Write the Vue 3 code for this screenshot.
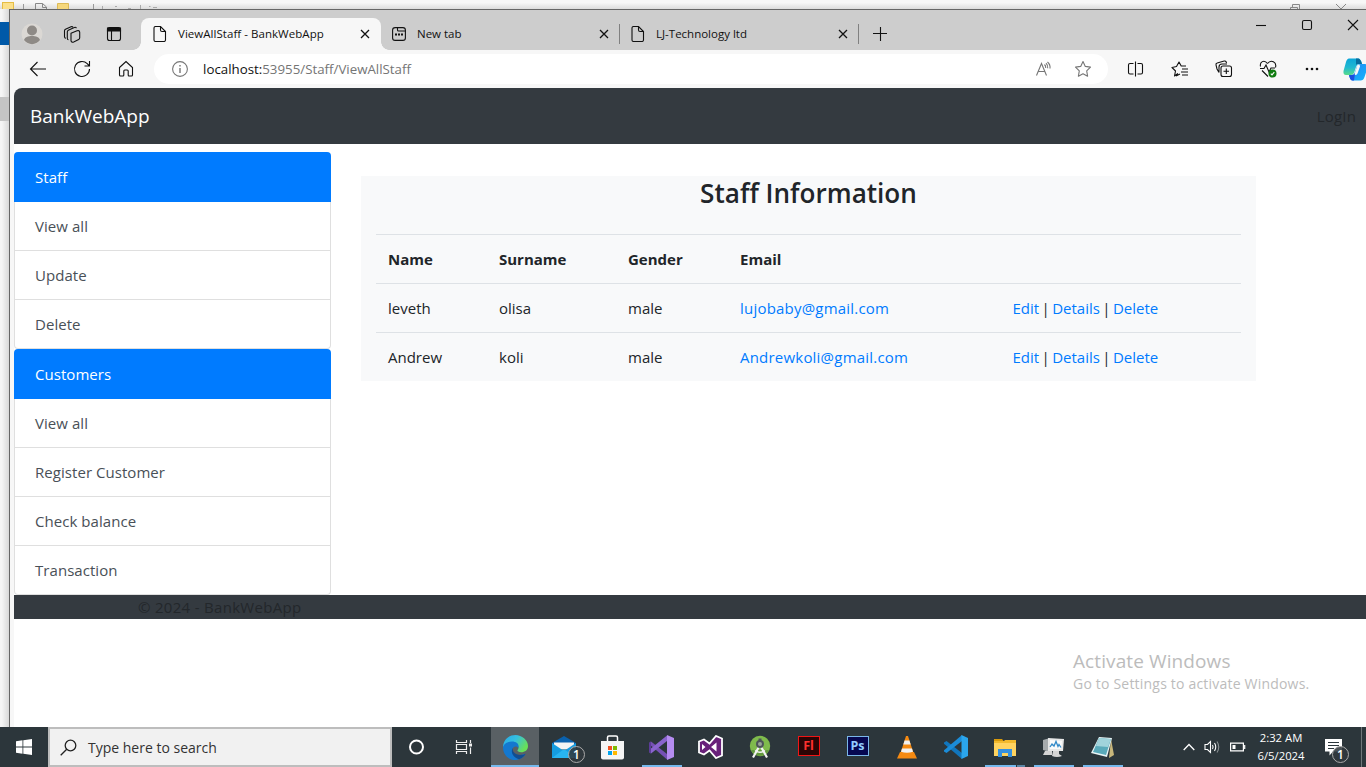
<script setup>
const groups = [
  { title: 'Staff', items: ['View all', 'Update', 'Delete'] },
  { title: 'Customers', items: ['View all', 'Register Customer', 'Check balance', 'Transaction'] },
]
const staff = [
  { name: 'leveth', surname: 'olisa', gender: 'male', email: 'lujobaby@gmail.com' },
  { name: 'Andrew', surname: 'koli', gender: 'male', email: 'Andrewkoli@gmail.com' },
]
</script>

<template>
  <div class="screen">
    <div class="desk">
      <div class="behind-top">
        <svg width="1366" height="9" viewBox="0 0 1366 9">
          <rect x="2.5" y="2.5" width="11" height="14" fill="#fbe08b" stroke="#e5bd45" />
          <path d="M23.5 4v5M93.5 4v5" stroke="#999" />
          <path d="M35.5 9V3.500h7l4 3.500v2M42.500 3.500v4h4" fill="none" stroke="#888" />
          <path d="M57.500 9V3.500h11V9" fill="#f5d77c" stroke="#dcba57" />
          <path d="M102.500 6v3M115 6.500h2M128 8.500h3M140.500 5v4M149 6.500h1.500M153 7.500h4" stroke="#aaa" />
          <path d="M1290.500 9V7.500h7V9M1292.500 7V4.500h7V9M1336 4l5 5 5-5" fill="none" stroke="#888" />
        </svg>
      </div>
      <div class="behind-left"><i class="blue"></i><i class="grey"></i></div>
      <div class="window">
        <div class="tabs">
          <span class="slot avatar"><svg width="22" height="22" viewBox="0 0 22 22"><circle cx="11" cy="11" r="10.500" fill="#dbd8d4" /><circle cx="11" cy="7.500" r="5" fill="#8e8a86" /><path d="M3 17c1-5.500 15-5.500 16 0-4 5.500-12 5.500-16 0z" fill="#8e8a86" /></svg></span>
          <span class="slot stack"><svg width="18" height="18" viewBox="0 0 18 18" class="ico"><path d="M7.500 7.500l6-2.500q2.500-.7 2.700 1.500v5.500q0 1.200-1 1.700l-5 2.600q-2.200.7-2.700-1.500zM5 14q-1.200 0-1.200-1.500V6q0-1 1-1.600l6-2.700q1.300-.6 2.200.6M2.500 12.500q-1.500 0-1.500-1.500V5q0-1 1-1.500l5.500-2.500q1.200-.5 2 .3" transform="translate(.5 .8)" /></svg></span>
          <span class="slot mid"><svg width="16" height="16" viewBox="0 0 16 16" class="ico"><rect x="1.500" y="1.500" width="13" height="13" rx="2" /><path d="M1.500 2h13v3h-13z" fill="#111" /><path d="M5.500 5v9.500" /></svg></span>
          <div class="tab active">
            <svg width="14" height="16" viewBox="0 0 14 16" class="ico"><path d="M2.500.5h5l5 5V14q0 1.500-1.500 1.500H2.500Q1 15.500 1 14V2Q1 .5 2.500.5zM7.500.5V4q0 1.500 1.500 1.500h3.500" /></svg>
            <span class="tab-title">ViewAllStaff - BankWebApp</span>
            <svg width="10" height="10" viewBox="0 0 10 10" class="ico x"><path d="M1 1l8 8M9 1L1 9" /></svg>
          </div>
          <div class="tab">
            <svg width="14" height="14" viewBox="0 0 14 14" class="ico"><rect x=".6" y=".6" width="12.800" height="12.800" rx="2.500" /><path d="M5.500.6V3q0 1 1 1h7" /><path d="M3 7.500h2M6 7.500h2M9 7.500h2" stroke-width="2" /></svg>
            <span class="tab-title">New tab</span>
            <svg width="10" height="10" viewBox="0 0 10 10" class="ico x"><path d="M1 1l8 8M9 1L1 9" /></svg>
            <i class="sep"></i>
          </div>
          <div class="tab">
            <svg width="14" height="16" viewBox="0 0 14 16" class="ico"><path d="M2.500.5h5l5 5V14q0 1.500-1.500 1.500H2.500Q1 15.500 1 14V2Q1 .5 2.500.5zM7.500.5V4q0 1.500 1.500 1.500h3.500" /></svg>
            <span class="tab-title">LJ-Technology ltd</span>
            <svg width="10" height="10" viewBox="0 0 10 10" class="ico x"><path d="M1 1l8 8M9 1L1 9" /></svg>
            <i class="sep"></i>
          </div>
          <svg width="14" height="14" viewBox="0 0 14 14" class="ico plus"><path d="M0 6.500h14M7.500 0v14" /></svg>
          <div class="controls">
            <svg width="12" height="12" viewBox="0 0 12 12" class="ico"><path d="M1 6.500h10" /></svg>
            <svg width="12" height="12" viewBox="0 0 12 12" class="ico"><rect x="1.500" y="1.500" width="9" height="9" rx="1.500" /></svg>
            <svg width="12" height="12" viewBox="0 0 12 12" class="ico"><path d="M1 1l10 10M11 1L1 11" /></svg>
          </div>
        </div>

        <div class="toolbar">
          <span class="btn"><svg width="18" height="16" viewBox="0 0 18 16" class="ico"><path d="M17 8H1.500M8.500 1l-7 7 7 7" /></svg></span>
          <span class="btn"><svg width="18" height="18" viewBox="0 0 18 18" class="ico"><path d="M16.500 9a7.500 7.500 0 1 1-2.300-5.400L16.500 6M16.500 1v5h-5" /></svg></span>
          <span class="btn"><svg width="16" height="18" viewBox="0 0 16 18" class="ico"><path d="M1.500 7.500L8 1.500l6.500 6V15q0 1-1 1H11q-.8 0-.8-1v-4q0-1-1-1H6.800q-1 0-1 1v4q0 1-.8 1H2.500q-1 0-1-1z" /></svg></span>
          <div class="address">
            <svg width="16" height="16" viewBox="0 0 16 16" class="ico soft"><circle cx="8" cy="8" r="7.400" /><path d="M8 7v5M8 4v1.500" stroke-width="1.400" /></svg>
            <span class="url">localhost:<em>53955/Staff/ViewAllStaff</em></span>
            <svg width="17" height="16" viewBox="0 0 17 16" class="ico soft read"><path d="M1.500 14.500l5-12 5 12M3.200 10.500h6.600M9.500 3.500q1.500 1.500 1.200 3.500M11 2.200q2 2 1.700 5M12.500 1q3 2.500 2.500 6.500" /></svg>
            <svg width="18" height="18" viewBox="0 0 18 18" class="ico soft"><path d="M9 1.500l2.300 4.900 5.200.7-3.800 3.700.9 5.400L9 13.700l-4.600 2.500.9-5.400L1.500 7.100l5.200-.7z" stroke-linejoin="round" /></svg>
          </div>
          <span class="btn"><svg width="17" height="16" viewBox="0 0 17 16" class="ico"><path d="M6.500 2.500H3q-1.500 0-1.500 1.500v7.500Q1.500 13 3 13h3.500M10.500 2.500H14q1.500 0 1.500 1.500v7.500q0 1.500-1.500 1.500h-3.500M8.500.5v15" /></svg></span>
          <span class="btn"><svg width="18" height="18" viewBox="0 0 18 18" class="ico"><path d="M7 13.500L3.500 16l1-5L1 7.500l4.500-1L8 2l2.200 4H15M5 16l4-2M11 9h6M10 12h7M11 15h6" stroke-linejoin="round" /></svg></span>
          <span class="btn"><svg width="18" height="18" viewBox="0 0 18 18" class="ico"><rect x="6" y="6" width="10.500" height="10.500" rx="2" /><path d="M11.300 8.500v5.500M8.500 11.300H14M4 12.500L2 9 1 5q-.3-1.700 1.200-2l7-2q1.500-.3 2 1l.3 1M4 12.500V7q0-3 3-3h5" /></svg></span>
          <span class="btn"><svg width="18" height="18" viewBox="0 0 18 18" class="ico"><path d="M8.500 3.500C5-1 .5 2 1.500 6.500M8.500 3.500C12-1 18 2 16.500 7.500M1 8.500h4L7 5l3 7 2-4h4M3 10.500l6 6" /><circle cx="13.500" cy="13.500" r="4" fill="#107c10" stroke="none" /><path d="M11.800 13.700l1.200 1.200 2.300-2.700" stroke="#fff" /></svg></span>
          <span class="btn"><svg width="14" height="4" viewBox="0 0 14 4" fill="#111"><circle cx="2" cy="2" r="1.300" /><circle cx="7" cy="2" r="1.300" /><circle cx="12" cy="2" r="1.300" /></svg></span>
          <svg class="copilot" width="24" height="23" viewBox="0 0 24 23">
            <defs>
              <linearGradient id="cpA" x1="0" y1="0" x2="0" y2="1"><stop offset="0" stop-color="#0aa5d8" /><stop offset=".55" stop-color="#21b9d0" /><stop offset="1" stop-color="#58dc8a" /></linearGradient>
              <linearGradient id="cpB" x1="0" y1="0" x2="1" y2="1"><stop offset="0" stop-color="#2487f4" /><stop offset="1" stop-color="#13b5fb" /></linearGradient>
            </defs>
            <path d="M6 .5h9q3 0 4 5.500h-3q-2 0-3 3l-2 6q-1 2-3 2H3Q0 17 .5 13L3 4Q4 .5 6 .5z" fill="url(#cpA)" />
            <path d="M13 .5h2.500q2 .5 3.500 5.500h-4q-1.500 0-2 1z" fill="#076d9e" />
            <path d="M18 6h4q3 0 2.500 4l-3 9q-1 3.500-4 3.500H10q-3 0-4-5.500h3q2 0 3-3l2-6q1-2 4-2z" fill="url(#cpB)" />
            <path d="M14.500 7h1.500q1.500 0 1 1.500l-2.500 7q-.7 1.500-2.500 1.500H9.500q1.700 0 2.500-2.500z" fill="#f7f7f7" />
            <path d="M6 17h3q2 0 3-2l-1 7.500H9q-2-.5-3-5.500z" fill="#1b4fe0" />
          </svg>
        </div>

        <div class="page">
          <nav class="navbar"><span class="brand">BankWebApp</span><span class="login">LogIn</span></nav>
          <div class="body">
            <aside>
              <ul v-for="g in groups" :key="g.title" class="group">
                <li class="head">{{ g.title }}</li>
                <li v-for="i in g.items" :key="i">{{ i }}</li>
              </ul>
            </aside>
            <main>
              <h2><span>Staff Information</span></h2>
              <table>
                <colgroup><col class="c1" /><col class="c2" /><col class="c3" /><col class="c4" /><col /></colgroup>
                <thead><tr><th>Name</th><th>Surname</th><th>Gender</th><th>Email</th><th></th></tr></thead>
                <tbody>
                  <tr v-for="s in staff" :key="s.email">
                    <td>{{ s.name }}</td><td>{{ s.surname }}</td><td>{{ s.gender }}</td>
                    <td class="mail"><a>{{ s.email }}</a></td>
                    <td class="acts"><a>Edit</a> | <a>Details</a> | <a>Delete</a></td>
                  </tr>
                </tbody>
              </table>
            </main>
          </div>
          <footer><span>© 2024 - BankWebApp</span></footer>
        </div>
      </div>
    </div>

    <div class="watermark"><p class="w1">Activate Windows</p><p class="w2">Go to Settings to activate Windows.</p></div>

    <div class="taskbar">
      <span class="start"><svg width="16" height="16" viewBox="0 0 16 16" fill="#fff"><path d="M0 2.200L6.500 1.300V7.600H0zM7.300 1.200L16 0v7.600H7.300zM0 8.400h6.500v6.300L0 13.800zM7.300 8.400H16V16l-8.700-1.200z" /></svg></span>
      <div class="search">
        <svg width="17" height="17" viewBox="0 0 17 17" fill="none" stroke="#222" stroke-width="1.300"><circle cx="10.500" cy="6.500" r="5.300" /><path d="M6.700 10.300L.7 16.300" /></svg>
        <span>Type here to search</span>
      </div>
      <span class="app"><svg width="18" height="18" viewBox="0 0 18 18"><circle cx="8.500" cy="9" r="6.500" fill="none" stroke="#fff" stroke-width="2" /></svg></span>
      <span class="app tv"><svg width="18" height="16" viewBox="0 0 18 16" fill="none" stroke="#eee" stroke-width="1.200"><path d="M1.500 1v2.500h10V1M1.500 15v-2.500h10V15M1.500 5.500h10v5h-10zM15.500 1v3M15.500 8.500V15" /><path d="M14 6h3" stroke-width="3" /></svg></span>
      <span class="app on"><svg width="25" height="25" viewBox="0 0 24 24">
        <defs><linearGradient id="eg" x1="0" y1="0" x2="1" y2=".5"><stop offset="0" stop-color="#28a9e8" /><stop offset=".5" stop-color="#35bfe0" /><stop offset="1" stop-color="#68e058" /></linearGradient></defs>
        <path d="M0 12C0 4 6 0 12 0s12 5 12 10.500c0 4-3 6-6.500 6-3 0-4-1.200-3.500-2 1.800-2 1-6-4-6C5 8.500 1 10 0 12z" fill="url(#eg)" />
        <path d="M0 12C.5 8.500 4 6.300 8.500 6.300c5.500 0 7.500 3.500 6 6.200C13 10 9 11 9 14.500c0 4 5 6.500 12.500 3.500-2 4-6 6-10 6C5 24 0 18.500 0 12z" fill="#1478cf" />
        <path d="M9.200 12.500C7 17 10 22 15.500 23.300c3-1 5-3 6.200-5.300-4.700 2.300-12.700 1.500-12.500-5.500z" fill="#114d91" />
      </svg></span>
      <span class="app badge-host"><svg width="24" height="23" viewBox="0 0 24 23"><path d="M0 7L12 0l12 7v4H0z" fill="#0a61ad" /><path d="M2 6.500h20v7H2z" fill="#f4f4f4" /><path d="M0 7l12 8 12-8v15H0z" fill="#159ce0" /><path d="M0 22L12 13l12 9z" fill="#28b4f1" /></svg><b class="badge">1</b></span>
      <span class="app"><svg width="23" height="25" viewBox="0 0 23 25"><path d="M6.500 8V2.500Q6.500 1 8 1h7q1.500 0 1.500 1.500V8" fill="none" stroke="#fff" stroke-width="1.500" /><path d="M0 6h23v16.500Q23 24.500 21 24.500H2q-2 0-2-2z" fill="#f5f5f5" /><path d="M7 11h4v4H7z" fill="#f25022" /><path d="M12 11h4v4h-4z" fill="#7fba00" /><path d="M7 16h4v4H7z" fill="#00a4ef" /><path d="M12 16h4v4h-4z" fill="#ffb900" /></svg></span>
      <span class="app run"><svg width="25" height="25" viewBox="0 0 25 25"><path d="M0 8l2-1.500L18 19v5.500L0 9z" fill="#7651b5" /><path d="M0 17l2 1.500L18 6V.5L0 15z" fill="#8a64ce" /><path d="M0 8v9l2 1.500V6.500z" fill="#5c3c99" /><path d="M18 0l7 3v19l-7 3z" fill="#b58cf0" /></svg></span>
      <span class="app"><svg width="25" height="24" viewBox="0 0 25 24"><path d="M1 6.500l5-2 5.500 4L18 1l6 2.500v17L18 23l-6.500-7.500-5.500 4-5-2z" fill="#68217a" stroke="#fff" stroke-width="1.800" /><path d="M4 9l3.500 3L4 15zM18.500 7.500v9L13 12z" fill="#fff" /></svg></span>
      <span class="app"><svg width="22" height="24" viewBox="0 0 22 24"><circle cx="11" cy="11" r="10.200" fill="#7fbb4c" /><path d="M2 15a10 10 0 0 0 18 0z" fill="#62983d" /><path d="M11 10L4 22.500M11 10l7 12.500" fill="none" stroke="#f3f3f3" stroke-width="2.200" /><path d="M6 15.500q5 3.500 10 0" fill="none" stroke="#f3f3f3" stroke-width="1.500" /><circle cx="11" cy="9" r="3" fill="#9aa49a" stroke="#4d5559" stroke-width="2" /><path d="M11 3.500v3" stroke="#4d5559" stroke-width="3" /></svg></span>
      <span class="app up"><b class="tile fl">Fl</b></span>
      <span class="app up"><b class="tile ps">Ps</b></span>
      <span class="app"><svg width="20" height="23" viewBox="0 0 20 23"><path d="M3 16h14l3 6.500H0z" fill="#f58a12" /><path d="M9 0h2l5.500 17q-6.500 3.500-13 0z" fill="#f58a12" /><path d="M7.600 4.500h4.800l1.300 4H6.300zM5 12.500h10l1 3.200q-6 2-12 0z" fill="#f1f1f1" /></svg></span>
      <span class="app"><svg width="24" height="24" viewBox="0 0 24 24"><path d="M0 7.500L2.500 6 18 18v6L0 8.800z" fill="#1176bd" /><path d="M0 16.500L2.500 18 18 6V0L0 15.200z" fill="#1b8cd8" /><path d="M17.500 0L24 3v18l-6.500 3z" fill="#2ba6ed" /></svg></span>
      <span class="app run two"><svg width="22" height="19" viewBox="0 0 22 19"><path d="M0 1h8l2 2.500h-10z" fill="#d99a0b" /><path d="M0 3.500h22V18H0z" fill="#ffd35f" /><path d="M0 3h10l1-1h11v3H0z" fill="#f2b92d" /><path d="M4 19v-8h14v8h-4v-4H8v4z" fill="#3690df" /></svg></span>
      <span class="app run"><svg width="23" height="21" viewBox="0 0 23 21"><path d="M1 3l7-2v14l-7-2z" fill="#a6abad" /><path d="M6 1l16 1-1 12H6z" fill="#e6e7e7" /><path d="M8 3l12 .7-.7 8.300H8z" fill="#fafafa" /><path d="M8 10l2-3 2 2 2-4.500 2 5 1-2 2 3" fill="none" stroke="#3189c8" stroke-width="1.300" /><path d="M3 14h7v4H1zM11 14h6v3l3 2q-5 2-10 0z" fill="#d5d5d5" /></svg></span>
      <span class="app run"><svg width="23" height="22" viewBox="0 0 23 22"><path d="M20 3l3 16-5 3z" fill="#c8b77b" /><path d="M8 1l13 1-5 19-16-4z" fill="#eaf5f6" /><path d="M8 2l12 1-5 16-13-3z" fill="#5aaaba" /><path d="M8 2l12 1-3 8-12-1z" fill="#a1d3db" /></svg></span>
      <div class="tray">
        <svg class="caret" width="12" height="8" viewBox="0 0 12 8" fill="none" stroke="#fff" stroke-width="1.300"><path d="M.7 7L6 1.500 11.300 7" /></svg>
        <svg class="vol" width="17" height="14" viewBox="0 0 17 14" fill="none" stroke="#fff" stroke-width="1.100"><path d="M1 4.500h2.500l3-3v11l-3-3H1zM8.500 5q1.200 2 0 4M10.500 3q2.500 4 0 8" /><path d="M13 1.500q3.500 5.500 0 11" stroke="#8a9194" /></svg>
        <svg class="bat" width="16" height="10" viewBox="0 0 16 10"><path d="M.6 1.100h12.800v7.800H.6zM14.700 3v4" fill="none" stroke="#fff" stroke-width="1.200" /><path d="M2.500 3h3v4h-3z" fill="#fff" /></svg>
        <div class="clock"><span>2:32 AM</span><span>6/5/2024</span></div>
        <span class="note"><svg width="17" height="17" viewBox="0 0 17 17"><path d="M0 0h17v12.500H8L4.500 16.500v-4H0z" fill="#fff" /><path d="M3 3.500h11M3 6.500h11M3 9.500h6" stroke="#2c373c" /></svg><b class="badge">1</b></span>
        <i class="peek"></i>
      </div>
    </div>
  </div>
</template>

<style>
body { margin: 0; overflow: hidden; }
</style>

<style scoped>
.screen { position: relative; width: 1366px; height: 767px; overflow: hidden; display: flex; flex-direction: column; background: #fff; font: 15px/24px "Open Sans", "Noto Sans", sans-serif; color: #212529; }
.screen * { box-sizing: border-box; }
svg { display: block; flex: none; }
.ico { fill: none; stroke: #111; stroke-width: 1.1; }
.soft { stroke: #767676; }
.desk { height: 727px; display: grid; grid-template: 9px 718px / 9px 1357px; }
.behind-top { grid-column: 1 / 3; background: linear-gradient(#f7f7f7 30%, #dcdcdc); overflow: hidden; }
.behind-left { background: linear-gradient(90deg, #f5f5f5 20%, #d8d8d8); display: flex; flex-direction: column; padding-top: 13px; }
.behind-left .blue { height: 23px; background: #0059a8; }
.behind-left .grey { height: 24px; margin-top: 52px; background: #c4c4c4; }
.window { border-left: 1px solid #666; border-top: 1px solid #666; background: #f7f7f7; overflow: hidden; }
.tabs { height: 40px; display: flex; align-items: flex-end; background: #cdcdcd; }
.slot { width: 44px; height: 32px; display: flex; align-items: center; justify-content: center; flex: none; }
.slot.stack { width: 36px; }
.slot.mid { width: 51px; padding-right: 3px; }
.tab { position: relative; width: 239px; height: 32px; flex: none; display: flex; align-items: center; padding: 0 11px; font-size: 11.500px; }
.tab.active { width: 240px; background: #f7f7f7; border-radius: 8px 8px 0 0; padding: 0 11px 0 12px; letter-spacing: .04px; }
.tab.active::before, .tab.active::after { content: ""; position: absolute; bottom: 0; width: 8px; height: 8px; }
.tab.active::before { left: -8px; background: radial-gradient(circle at 0 0, #cdcdcd 7.500px, #f7f7f7 8px); }
.tab.active::after { right: -8px; background: radial-gradient(circle at 100% 0, #cdcdcd 7.500px, #f7f7f7 8px); }
.tab-title { margin-left: 11px; white-space: nowrap; color: #111; }
.tab .x { margin-left: auto; stroke-width: 1.300; }
.sep { position: absolute; right: 0; top: 6px; width: 1px; height: 20px; background: #808080; }
.plus { margin: 0 0 9px 14px; }
.controls { margin-left: auto; height: 31px; display: flex; gap: 34px; padding-right: 7px; }
.toolbar { height: 38px; display: flex; align-items: center; padding-left: 6px; }
.btn { width: 44.200px; height: 38px; flex: none; display: flex; align-items: center; justify-content: center; }
.address { width: 954px; height: 30px; flex: none; margin: 0 6px 0 5px; border-radius: 15px; background: #fff; display: flex; align-items: center; padding: 0 16px 0 18px; }
.url { margin-left: 15.500px; font-size: 13.300px; color: #111; white-space: nowrap; }
.url em { font-style: normal; color: #757575; }
.read { margin: 0 22px 0 auto; }
.copilot { margin-left: 8px; }
.page { height: 639px; margin-left: 4px; background: #fff; border-radius: 8px 0 0 0; overflow: hidden; }
.navbar { height: 56px; background: #343a40; display: flex; align-items: center; justify-content: space-between; padding: 0 10px 0 16px; }
.brand { color: #fff; font-size: 19px; line-height: 30px; }
.login { color: #23272b; letter-spacing: .15px; }
.body { display: flex; align-items: flex-start; padding-top: 8px; }
aside { width: 317px; }
.group { list-style: none; margin: 0; padding: 0; }
.group li { height: 49px; padding: 12px 20px; border: solid #dfdfdf; border-width: 0 1px 1px; color: #495057; letter-spacing: .05px; }
.group li:last-child { border-radius: 0 0 4px 4px; }
.group .head { height: 50px; padding: 13px 21px; border: 0; background: #007bff; color: #fff; border-radius: 4px 4px 0 0; }
main { width: 895px; height: 205px; margin: 24px 0 0 30px; padding: 0 15px; background: #f8f9fa; }
h2 { margin: 0; height: 58px; font-size: 26.100px; line-height: 35px; font-weight: 600; text-align: center; }
table { width: 865px; table-layout: fixed; border-collapse: separate; border-spacing: 0; }
.c1 { width: 111px; } .c2 { width: 129px; } .c3 { width: 112px; } .c4 { width: 272px; }
th, td { height: 49px; padding: 0 12px; border-top: 1px solid #dee2e6; text-align: left; white-space: nowrap; vertical-align: middle; }
th { font-weight: 700; }
.mail { letter-spacing: .21px; }
.acts { word-spacing: -1.500px; padding-left: 12.500px; }
a { color: #007bff; }
footer { height: 24px; background: #343a40; color: #23272b; padding-left: 124px; letter-spacing: .3px; }
.watermark { position: absolute; left: 1073px; top: 648px; color: #bcbcbc; white-space: nowrap; }
.watermark p { margin: 0; }
.w1 { font-size: 19px; line-height: 26px; letter-spacing: .1px; }
.w2 { font-size: 14px; line-height: 20px; letter-spacing: .2px; }
.taskbar { height: 40px; display: flex; background: #2c363b; color: #fff; }
.start { width: 48px; display: flex; align-items: center; justify-content: center; }
.search { width: 344px; flex: none; border: 2px solid #bdbdbd; background: #f1f1f1; display: flex; align-items: center; padding-left: 10px; color: #333; }
.search span { margin-left: 11px; font-size: 14px; padding-top: 1px; }
.app { position: relative; width: 49px; flex: none; display: flex; align-items: center; justify-content: center; }
.app.tv { margin-right: 1px; padding-right: 3px; }
.app.on { width: 48px; background: #596064; border-bottom: 2px solid #76b9ed; padding-top: 2px; }
.app.run::after { content: ""; position: absolute; left: 5px; bottom: 0; width: 40px; height: 2px; background: #76b9ed; }
.app.run.two::after { background: linear-gradient(90deg, #76b9ed 31px, #2c363b 31px 32px, #5c86a5 32px); }
.app.up { padding-bottom: 3px; }
.tile { width: 22px; height: 20px; font-size: 12.500px; line-height: 17px; text-align: center; border: 1px solid; }
.fl { color: #ff302e; background: #2b0505; border-color: #f01515; }
.ps { color: #93cdff; background: #060851; border-color: #7ab7e9; }
.badge { position: absolute; width: 17px; height: 17px; border: 1px solid #aaa; border-radius: 50%; background: #30393ddd; font-size: 12px; line-height: 15px; text-align: center; font-weight: 600; }
.badge-host .badge { left: 29px; top: 19px; }
.tray { margin-left: auto; width: 184px; display: flex; align-items: center; }
.caret { margin-left: 1px; }
.vol { margin-left: 9px; }
.bat { margin-left: 9px; }
.clock { width: 54px; margin-left: 8px; display: flex; flex-direction: column; align-items: center; font-size: 11.300px; line-height: 18px; white-space: nowrap; }
.note { position: relative; margin-left: 17px; }
.note .badge { left: 7px; top: 7px; }
.peek { width: 1px; height: 40px; background: #6f777a; margin: 0 4px 0 auto; }
</style>
